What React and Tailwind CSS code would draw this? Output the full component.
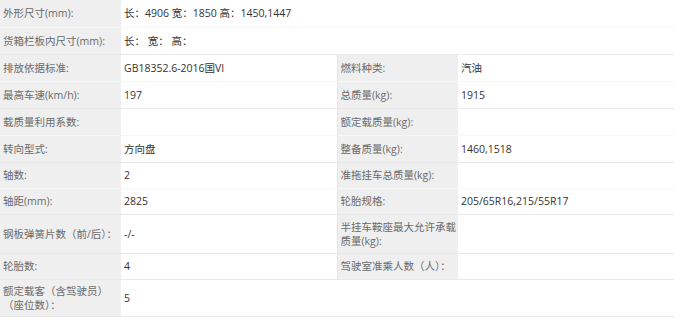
import React from "react";

const rows = [
  { l1: "外形尺寸(mm):", v1: "长：4906 宽：1850 高：1450,1447", full: true },
  { l1: "货箱栏板内尺寸(mm):", v1: "长： 宽： 高：", full: true },
  { l1: "排放依据标准:", v1: "GB18352.6-2016国VI", l2: "燃料种类:", v2: "汽油" },
  { l1: "最高车速(km/h):", v1: "197", l2: "总质量(kg):", v2: "1915" },
  { l1: "载质量利用系数:", v1: "", l2: "额定载质量(kg):", v2: "" },
  { l1: "转向型式:", v1: "方向盘", l2: "整备质量(kg):", v2: "1460,1518" },
  { l1: "轴数:", v1: "2", l2: "准拖挂车总质量(kg):", v2: "", short: true },
  { l1: "轴距(mm):", v1: "2825", l2: "轮胎规格:", v2: "205/65R16,215/55R17", short: true },
  {
    l1: "钢板弹簧片数（前/后）：",
    v1: "-/-",
    l2: "半挂车鞍座最大允许承载质量(kg):",
    v2: "",
  },
  { l1: "轮胎数:", v1: "4", l2: "驾驶室准乘人数（人）：", v2: "", short: true },
  { l1: "额定载客（含驾驶员）（座位数）：", v1: "5", full: true, short: true },
];

function App() {
  return (
    <div
      className="w-[688px] h-[332px] bg-white"
      style={{ fontFamily: '"Open Sans", "Noto Sans CJK SC", sans-serif' }}
    >
      <table className="w-[674px] border-collapse table-fixed text-[10.5px] leading-[14px]">
        <colgroup>
          <col className="w-[121px]" />
          <col className="w-[216px]" />
          <col className="w-[121px]" />
          <col className="w-[216px]" />
        </colgroup>
        <tbody>
          {rows.map((r, i) => (
            <tr
              key={i}
              className={
                i % 2 === 0 && i < 8
                  ? "border-b border-[#f6f6f6]"
                  : "border-b border-[#e9e9e9]"
              }
            >
              <td
                className={
                  (r.short ? "h-[26px] py-[4px] " : "h-[27px] py-[5px] ") +
                  (i === 8
                    ? "bg-[#efefef] text-[#6a6a6a] pl-[3px] align-middle whitespace-nowrap"
                    : "bg-[#efefef] text-[#6a6a6a] pl-[3px] pr-0 align-middle")
                }
              >
                {r.l1}
              </td>
              {r.full ? (
                <td colSpan={3} className="pl-[3px] text-[#333] align-middle">
                  {r.v1}
                </td>
              ) : (
                <>
                  <td className="pl-[3px] text-[#333] align-middle border-r border-[#e6e6e6]">
                    {r.v1}
                  </td>
                  <td className="bg-[#efefef] text-[#6a6a6a] pl-[3px] py-[5px] align-middle">
                    {r.l2}
                  </td>
                  <td className="pl-[3px] text-[#333] align-middle">
                    {r.v2}
                  </td>
                </>
              )}
            </tr>
          ))}
        </tbody>
      </table>
    </div>
  );
}

export default App;
